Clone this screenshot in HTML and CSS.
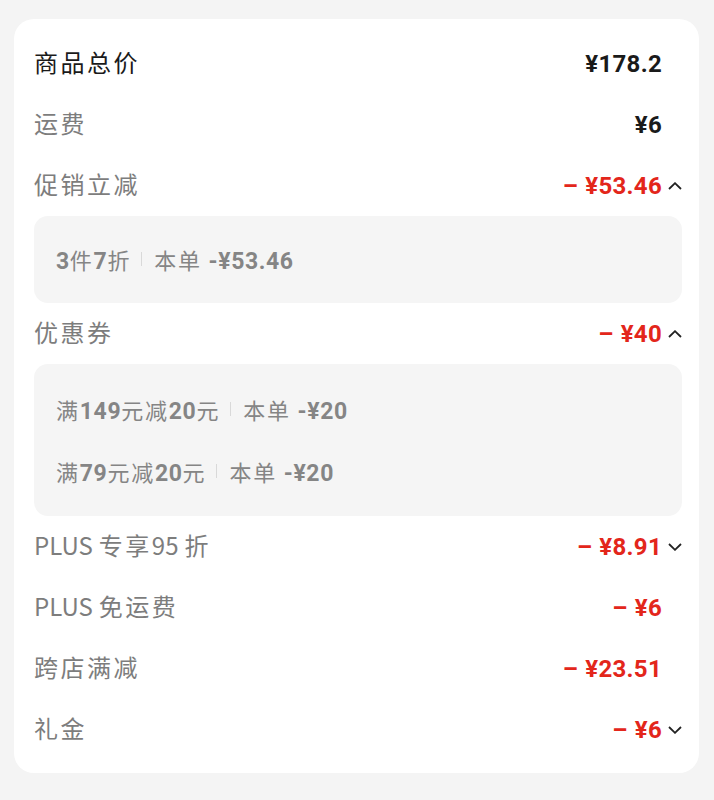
FILE: index.html
```html
<!DOCTYPE html>
<html lang="zh-CN">
<head>
<meta charset="utf-8">
<link rel="stylesheet" href="styles.css">
</head>
<body>
<div class="card">
  <div class="row">
    <span class="label label-dark">商品总价</span>
    <span class="value dark">¥178.2</span>
    <span class="arrow"></span>
  </div>
  <div class="row">
    <span class="label">运费</span>
    <span class="value dark">¥6</span>
    <span class="arrow"></span>
  </div>
  <div class="row">
    <span class="label">促销立减</span>
    <span class="value red"><span class="minus">–</span>¥53.46</span>
    <span class="arrow"><svg viewBox="0 0 14 8" width="14" height="8"><path d="M1 7 L7 1.2 L13 7" fill="none" stroke="#222" stroke-width="1.8"/></svg></span>
  </div>
  <div class="panel panel-one">
    <div class="pline"><span><b>3</b>件<b>7</b>折</span><i class="sep"></i><span>本单 <b>-¥53.46</b></span></div>
  </div>
  <div class="row">
    <span class="label">优惠券</span>
    <span class="value red"><span class="minus">–</span>¥40</span>
    <span class="arrow"><svg viewBox="0 0 14 8" width="14" height="8"><path d="M1 7 L7 1.2 L13 7" fill="none" stroke="#222" stroke-width="1.8"/></svg></span>
  </div>
  <div class="panel panel-two">
    <div class="pline"><span>满<b>149</b>元减<b>20</b>元</span><i class="sep"></i><span>本单 <b>-¥20</b></span></div>
    <div class="pline"><span>满<b>79</b>元减<b>20</b>元</span><i class="sep"></i><span>本单 <b>-¥20</b></span></div>
  </div>
  <div class="row">
    <span class="label"><span class="lat">PLUS</span>专享<span class="lat">95</span>折</span>
    <span class="value red"><span class="minus">–</span>¥8.91</span>
    <span class="arrow"><svg viewBox="0 0 14 8" width="14" height="8"><path d="M1 1 L7 6.8 L13 1" fill="none" stroke="#222" stroke-width="1.8"/></svg></span>
  </div>
  <div class="row">
    <span class="label"><span class="lat">PLUS</span>免运费</span>
    <span class="value red"><span class="minus">–</span>¥6</span>
    <span class="arrow"></span>
  </div>
  <div class="row">
    <span class="label">跨店满减</span>
    <span class="value red"><span class="minus">–</span>¥23.51</span>
    <span class="arrow"></span>
  </div>
  <div class="row">
    <span class="label">礼金</span>
    <span class="value red"><span class="minus">–</span>¥6</span>
    <span class="arrow"><svg viewBox="0 0 14 8" width="14" height="8"><path d="M1 1 L7 6.8 L13 1" fill="none" stroke="#222" stroke-width="1.8"/></svg></span>
  </div>
</div>
</body>
</html>
```
FILE: styles.css
```css
html, body {
  margin: 0;
  padding: 0;
  background: #f4f4f4;
}
body {
  padding: 19px 15px 27px 14px;
  font-family: "Noto Sans CJK SC", "Noto Sans", sans-serif;
}
.card {
  background: #ffffff;
  border-radius: 20px;
  padding: 14px 17px 13px 20px;
}
.row {
  display: flex;
  align-items: center;
  height: 61px;
}
.label {
  flex: 1;
  font-size: 24px;
  letter-spacing: 2.5px;
  color: #7d7d7d;
  line-height: 1;
  margin-top: -3px;
}
.label-dark {
  color: #1a1a1a;
}
.lat {
  letter-spacing: 0;
  margin-right: 6px;
}
.value {
  font-family: "Roboto", "Liberation Sans", sans-serif;
  font-weight: 700;
  font-size: 24px;
  line-height: 1;
  letter-spacing: 0.3px;
}
.minus {
  margin-right: 7px;
}
.dark { color: #1a1a1a; }
.red { color: #e3261b; }
.arrow {
  width: 20px;
  display: flex;
  justify-content: flex-end;
  align-items: center;
}
.arrow svg { display: block; }
.panel {
  background: #f5f5f5;
  border-radius: 14px;
  padding: 0 22px;
  color: #858585;
  font-size: 22px;
}
.panel-one { padding-top: 12px; padding-bottom: 13px; }
.panel-two { padding-top: 14px; padding-bottom: 14px; }
.pline {
  height: 62px;
  display: flex;
  align-items: center;
  letter-spacing: 1.8px;
}
.pline b {
  font-family: "Roboto", "Liberation Sans", sans-serif;
  font-weight: 700;
  font-size: 23px;
  letter-spacing: 0.6px;
}
.sep {
  display: inline-block;
  width: 1px;
  height: 14px;
  background: #d9d9d9;
  margin: 0 12px 0 10px;
}
```
